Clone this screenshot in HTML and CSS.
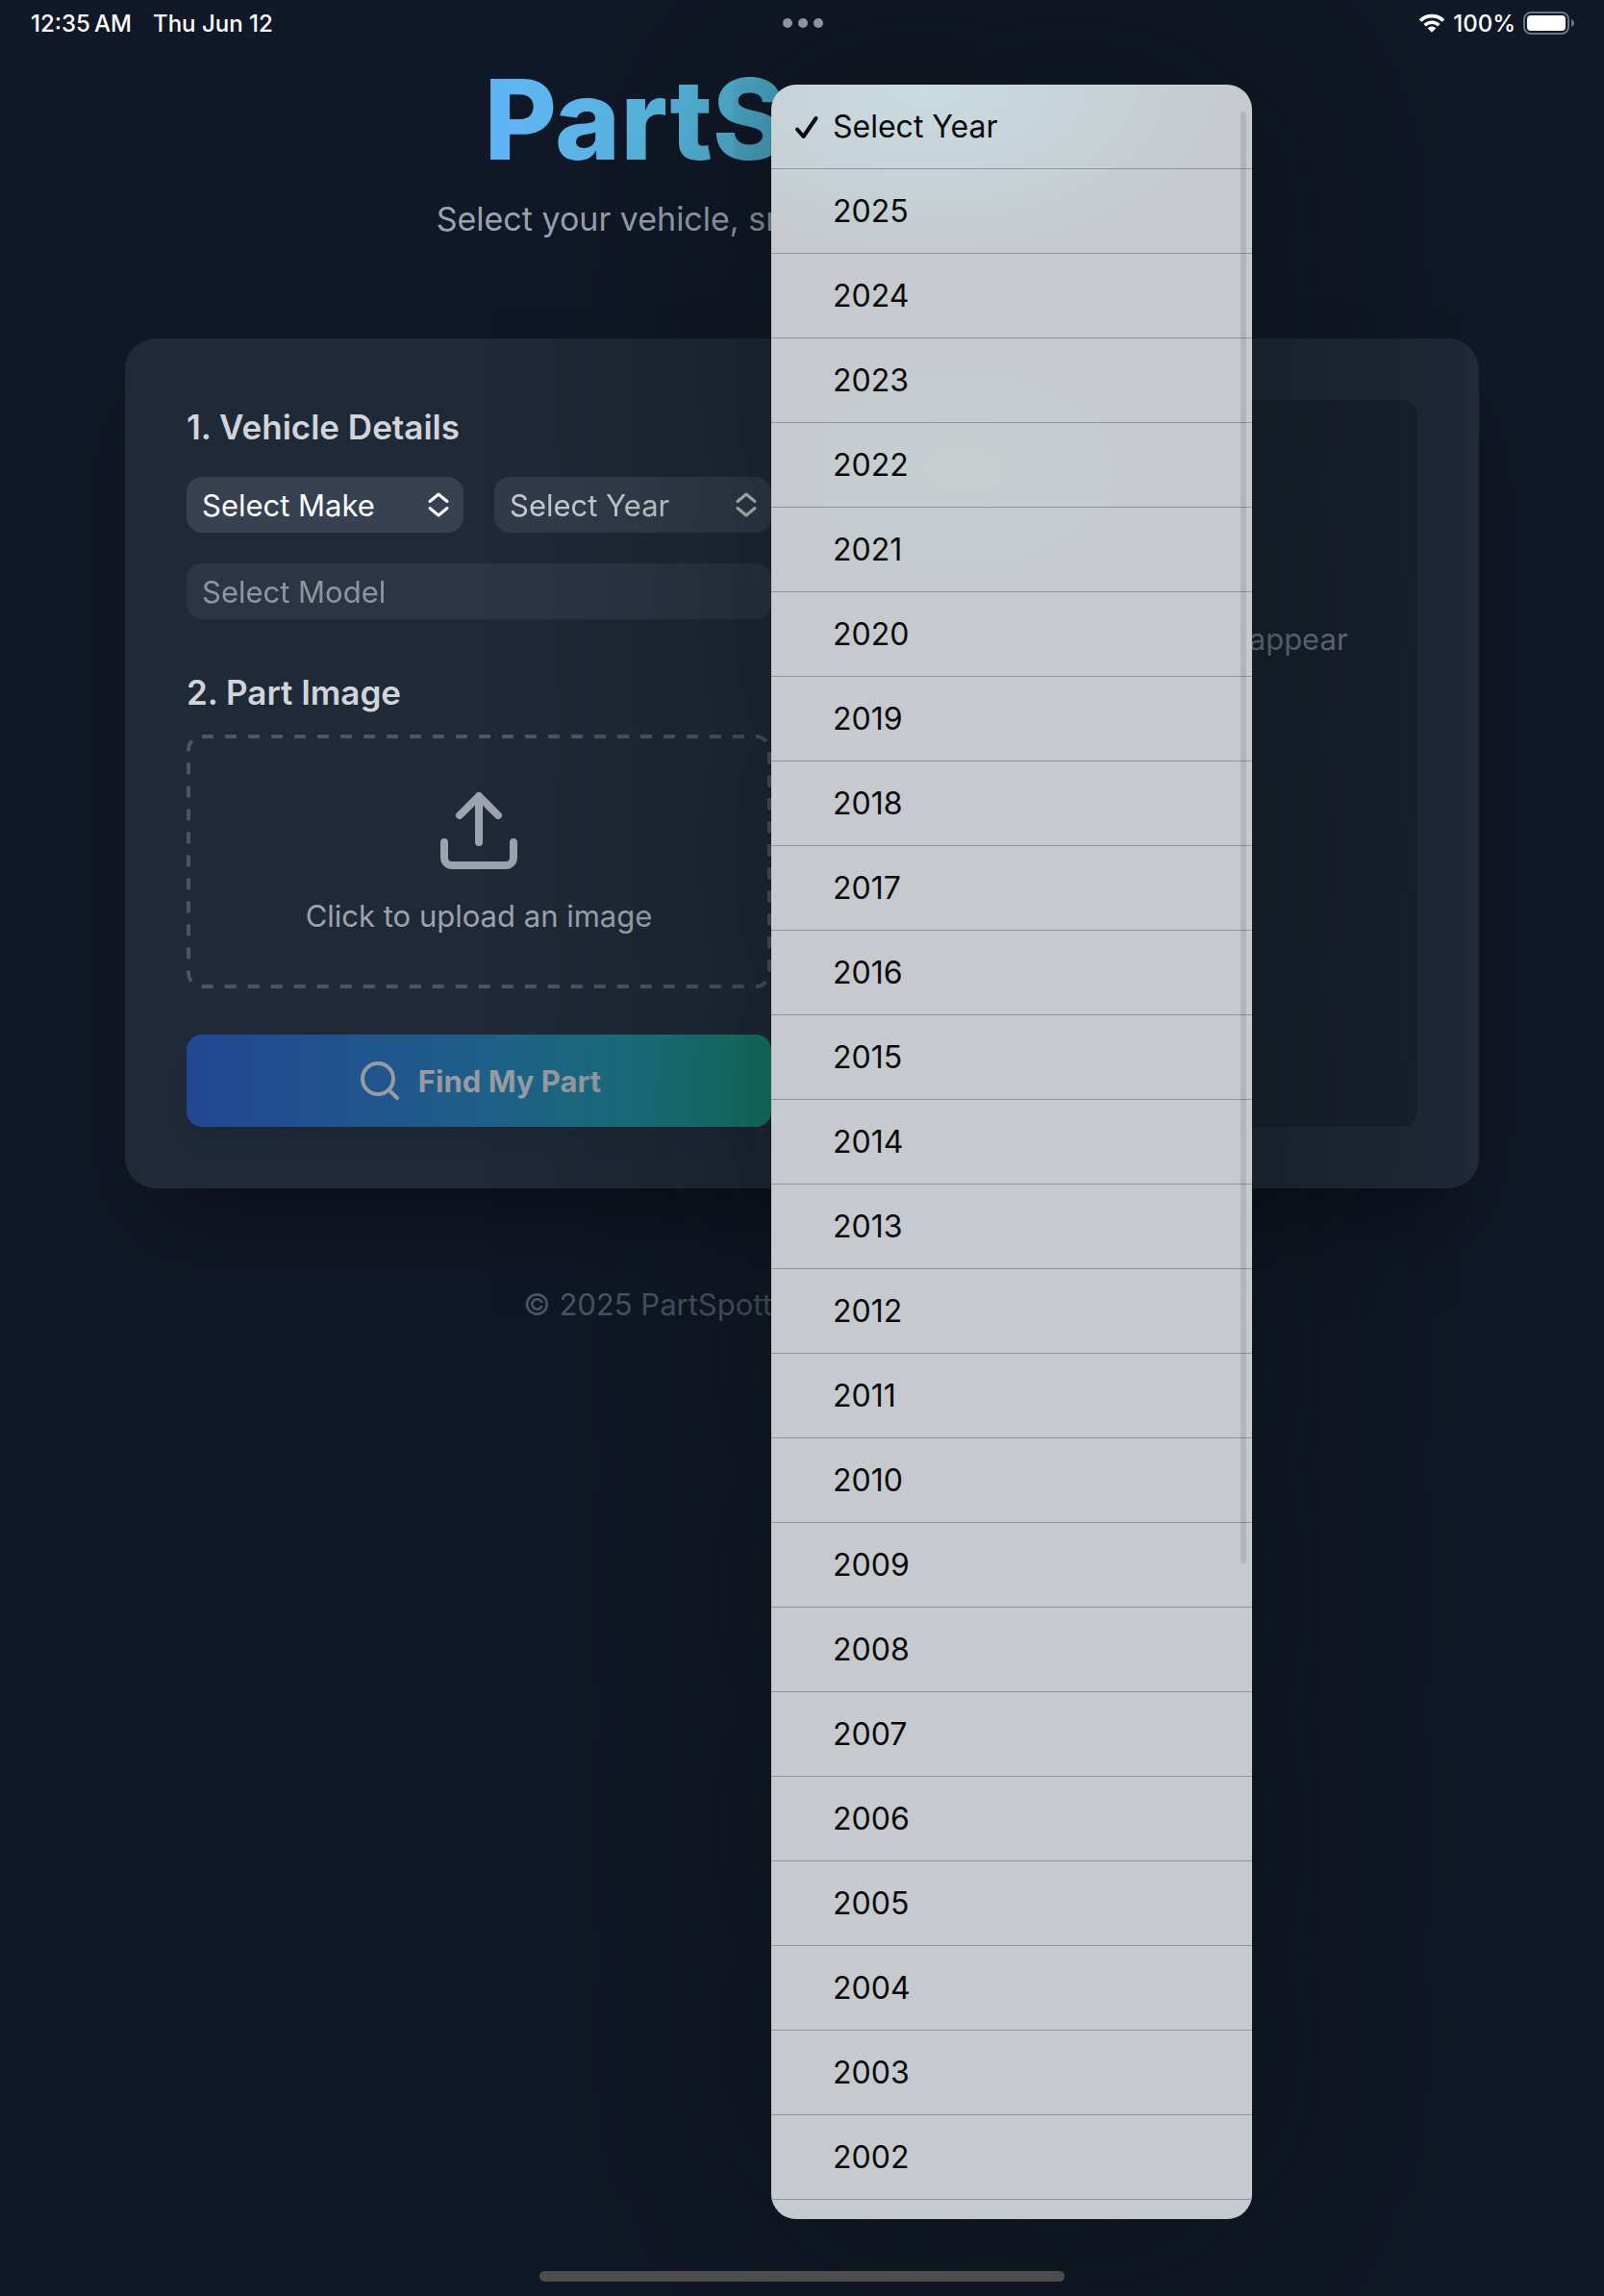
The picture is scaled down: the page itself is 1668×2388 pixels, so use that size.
FILE: index.html
```html
<!DOCTYPE html>
<html lang="en">
<head>
<meta charset="utf-8">
<meta name="viewport" content="width=device-width, initial-scale=1">
<title>PartSpotter</title>
<link rel="stylesheet" href="styles.css">
</head>
<body>
<div class="screen">
  <div class="status-bar">
    <div class="status-left"><span>12:35&thinsp;AM</span><span>Thu Jun 12</span></div>
    <div class="status-dots"><i></i><i></i><i></i></div>
    <div class="status-right">
      <svg class="wifi" viewBox="0 0 28 20" aria-hidden="true">
        <path d="M2 7.6a17 17 0 0 1 24 0M6.7 12.2a10.4 10.4 0 0 1 14.6 0" fill="none" stroke="#fff" stroke-width="3.6"/>
        <path d="M9.700 15.300a6.200 6.200 0 0 1 8.600 0L14 19.700z" fill="#fff"/>
      </svg>
      <span>100%</span>
      <svg class="battery" viewBox="0 0 54 24" aria-hidden="true">
        <rect x="1" y="1" width="46" height="22" rx="7" fill="none" stroke="#6f737d" stroke-width="2"/>
        <rect x="4" y="4" width="40" height="16" rx="4" fill="#fff"/>
        <path d="M50 8c4 1.500 4 6.500 0 8z" fill="#6f737d"/>
      </svg>
    </div>
  </div>

  <header class="hero">
    <h1>PartSpotter</h1>
    <p>Select your vehicle, snap a photo, get matches.</p>
  </header>

  <main class="card">
    <form class="finder">
      <section class="group vehicle">
        <h2>1. Vehicle Details</h2>
        <div class="fields">
          <div class="field">
            <select aria-label="Make"><option>Select Make</option></select>
            <svg class="chevrons" viewBox="0 0 24 26" aria-hidden="true"><path d="M3 9.500 12 2l9 7.500M3 16.500 12 24l9-7.500"/></svg>
          </div>
          <div class="field is-open">
            <select aria-label="Year"><option>Select Year</option></select>
            <svg class="chevrons" viewBox="0 0 24 26" aria-hidden="true"><path d="M3 9.500 12 2l9 7.500M3 16.500 12 24l9-7.500"/></svg>
          </div>
          <div class="field field-wide is-disabled">
            <select aria-label="Model" disabled><option>Select Model</option></select>
          </div>
        </div>
      </section>

      <section class="group image">
        <h2>2. Part Image</h2>
        <button type="button" class="upload">
          <svg class="dashes" aria-hidden="true"><rect x="2" y="2" rx="14"/></svg>
          <svg class="upload-icon" viewBox="0 0 24 24" aria-hidden="true"><path d="M21 15v4a2 2 0 0 1-2 2H5a2 2 0 0 1-2-2v-4M17 8l-5-5-5 5M12 3v12"/></svg>
          <span>Click to upload an image</span>
        </button>
      </section>

      <button type="submit" class="find" disabled>
        <svg viewBox="0 0 24 24" aria-hidden="true"><circle cx="11" cy="11" r="8"/><path d="m21 21-4.350-4.350"/></svg>
        <span>Find My Part</span>
      </button>
    </form>

    <section class="results">
      <p>Your matching parts will appear here</p>
    </section>
  </main>

  <footer class="footer">© 2025 PartSpotter. All rights reserved.</footer>

  <div class="popover">
    <ul role="listbox" aria-label="Year">
      <li role="option" aria-selected="true"><svg class="check" viewBox="0 0 26 26" aria-hidden="true"><path d="M3 14.500 9.500 22 22.500 3"/></svg>Select Year</li>
      <li role="option">2025</li>
      <li role="option">2024</li>
      <li role="option">2023</li>
      <li role="option">2022</li>
      <li role="option">2021</li>
      <li role="option">2020</li>
      <li role="option">2019</li>
      <li role="option">2018</li>
      <li role="option">2017</li>
      <li role="option">2016</li>
      <li role="option">2015</li>
      <li role="option">2014</li>
      <li role="option">2013</li>
      <li role="option">2012</li>
      <li role="option">2011</li>
      <li role="option">2010</li>
      <li role="option">2009</li>
      <li role="option">2008</li>
      <li role="option">2007</li>
      <li role="option">2006</li>
      <li role="option">2005</li>
      <li role="option">2004</li>
      <li role="option">2003</li>
      <li role="option">2002</li>
    </ul>
    <div class="scroll-thumb"></div>
  </div>

  <div class="home-indicator"></div>
</div>
</body>
</html>
```

FILE: styles.css
```css
*,
*::before,
*::after {
  box-sizing: border-box;
}

body {
  margin: 0;
  background: #111827;
  color: #fff;
  font-family: Inter, "Liberation Sans", sans-serif;
  font-size: 31px;
}

h1,
h2,
p,
ul {
  margin: 0;
  padding: 0;
}

button,
select {
  font: inherit;
  color: inherit;
}

.screen {
  position: relative;
  min-height: 100vh;
  overflow: hidden;
  display: flex;
  flex-direction: column;
}

/* Status bar */
.status-bar {
  position: relative;
  z-index: 3;
  display: grid;
  grid-template-columns: 1fr auto 1fr;
  align-items: center;
  height: 48px;
  padding: 0 30px 0 32px;
  font-size: 24px;
  font-weight: 500;
}

.status-left {
  display: flex;
  gap: 22px;
}

.status-dots {
  display: flex;
  gap: 6px;
}

.status-dots i {
  width: 10px;
  height: 10px;
  border-radius: 50%;
  background: #8e929e;
}

.status-right {
  display: flex;
  align-items: center;
  justify-content: flex-end;
  gap: 8px;
}

.wifi {
  width: 28px;
  height: 20px;
}

.battery {
  width: 54px;
  height: 24px;
}

/* Header */
.hero {
  padding-top: 16px;
  text-align: center;
}

.hero h1 {
  width: fit-content;
  margin: 0 auto 16px;
  font-size: 116px;
  line-height: 120px;
  font-weight: 800;
  background: linear-gradient(to right, #60b5f6, #5bbce6 25%, #50b6d6 45%, #2dd4bf);
  background-clip: text;
  -webkit-background-clip: text;
  color: transparent;
}

.hero p {
  font-size: 34px;
  line-height: 56px;
  color: #9ca3af;
}

/* Card */
.card {
  display: grid;
  grid-template-columns: 1fr 1fr;
  gap: 64px;
  margin: 96px 130px;
  padding: 64px;
  border-radius: 32px;
  background: #1f2937;
  box-shadow: 0 50px 100px -24px rgba(0, 0, 0, 0.4);
}

.finder {
  display: flex;
  flex-direction: column;
  gap: 48px;
}

.group {
  display: flex;
  flex-direction: column;
}

.vehicle {
  gap: 24px;
}

.image {
  gap: 16px;
}

.group h2 {
  font-size: 35px;
  line-height: 56px;
  font-weight: 600;
  color: #d1d5db;
}

.fields {
  display: grid;
  grid-template-columns: 1fr 1fr;
  gap: 32px;
}

.field {
  position: relative;
}

.field-wide {
  grid-column: 1 / -1;
}

.field select {
  display: block;
  width: 100%;
  height: 58px;
  padding: 0 16px;
  border: 0;
  border-radius: 16px;
  background: #374151;
  appearance: none;
  opacity: 1;
}

.is-open {
  opacity: 0.75;
}

.is-disabled {
  opacity: 0.5;
}

.chevrons {
  position: absolute;
  top: 16px;
  right: 14px;
  width: 24px;
  height: 26px;
  fill: none;
  stroke: #fff;
  stroke-width: 3;
  stroke-linecap: round;
  stroke-linejoin: round;
}

.upload {
  position: relative;
  display: flex;
  flex-direction: column;
  align-items: center;
  gap: 16px;
  padding: 52px 52px 50px;
  border: 0;
  border-radius: 16px;
  background: none;
  color: #9ca3af;
  line-height: 50px;
}

.dashes {
  position: absolute;
  inset: 0;
  width: 100%;
  height: 100%;
}

.dashes rect {
  width: calc(100% - 4px);
  height: calc(100% - 4px);
  fill: none;
  stroke: #4b5563;
  stroke-width: 4;
  stroke-dasharray: 12 12;
}

.upload-icon {
  width: 96px;
  height: 96px;
  fill: none;
  stroke: #9ca3af;
  stroke-width: 2;
  stroke-linecap: round;
  stroke-linejoin: round;
}

.find {
  display: flex;
  align-items: center;
  justify-content: center;
  gap: 16px;
  height: 96px;
  padding: 0;
  border: 0;
  border-radius: 16px;
  background: linear-gradient(to right, #224794, #1f5e88 50%, #1a7080 75%, #15806f);
  box-shadow: 0 20px 30px -6px rgba(0, 0, 0, 0.05);
  color: #979ba2;
  font-weight: 700;
}

.find svg {
  width: 48px;
  height: 48px;
  fill: none;
  stroke: currentColor;
  stroke-width: 2;
  stroke-linecap: round;
}

.results {
  padding: 224px 64px 64px;
  border-radius: 16px;
  background: #18202e;
  line-height: 50px;
  text-align: center;
  color: #6b7280;
}

.footer {
  line-height: 50px;
  text-align: center;
  color: #4b5563;
}

/* Year menu */
.popover {
  position: absolute;
  z-index: 2;
  top: 88px;
  bottom: 80px;
  left: calc(50% - 32px);
  width: 500px;
  border-radius: 26px;
  background:
    radial-gradient(340px 190px at 160px 0, #c8dce1, #c8dce100),
    radial-gradient(240px 160px at 200px 400px, #c7cfd1, #c7cfd100),
    #c6c9ce;
  box-shadow: 0 0 220px 40px rgba(8, 16, 14, 0.5);
  color: #0a0a0a;
  font-size: 32px;
}

.popover ul {
  list-style: none;
}

.popover li {
  position: relative;
  height: 88px;
  padding-left: 64px;
  border-bottom: 1px solid #9094a0;
  line-height: 88px;
}

.check {
  position: absolute;
  top: 32px;
  left: 24px;
  width: 26px;
  height: 26px;
  fill: none;
  stroke: #0a0a0a;
  stroke-width: 4;
  stroke-linecap: round;
  stroke-linejoin: round;
}

.scroll-thumb {
  position: absolute;
  top: 28px;
  right: 6px;
  width: 6px;
  height: 68%;
  border-radius: 3px;
  background: rgba(60, 60, 67, 0.15);
}

.home-indicator {
  position: absolute;
  z-index: 3;
  bottom: 15px;
  left: 50%;
  width: 546px;
  height: 11px;
  margin-left: -273px;
  border-radius: 6px;
  background: #4d4d4d;
}
```
